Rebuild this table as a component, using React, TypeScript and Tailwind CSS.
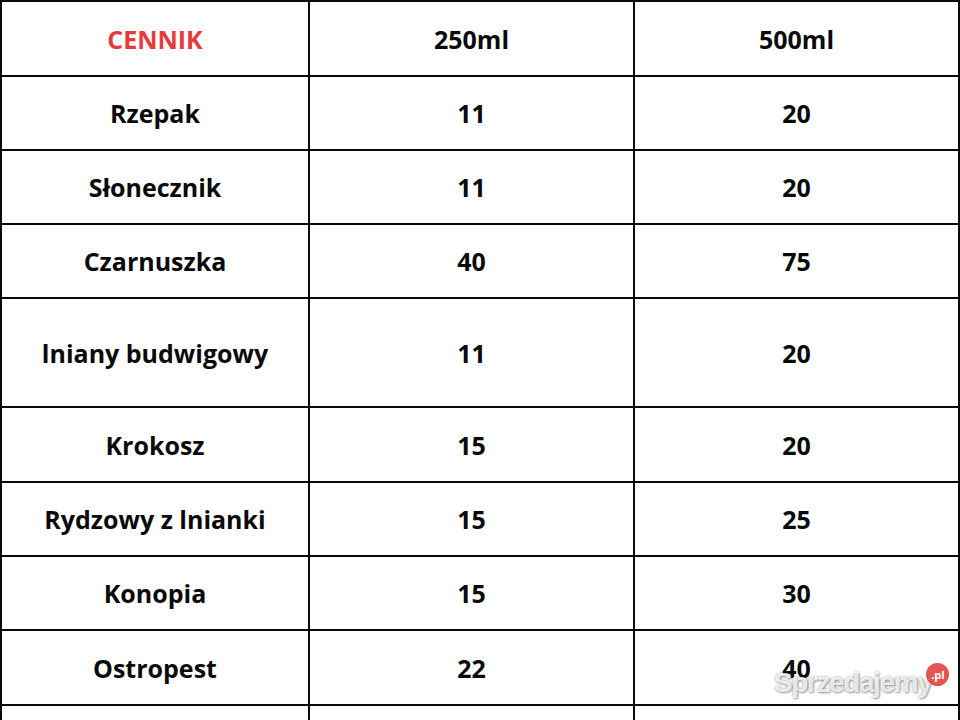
import React from "react";

const rows: { name: string; a: string; b: string; h: string }[] = [
  { name: "Rzepak", a: "11", b: "20", h: "h-[72px]" },
  { name: "Słonecznik", a: "11", b: "20", h: "h-[72px]" },
  { name: "Czarnuszka", a: "40", b: "75", h: "h-[72px]" },
  { name: "lniany budwigowy", a: "11", b: "20", h: "h-[107px]" },
  { name: "Krokosz", a: "15", b: "20", h: "h-[73px]" },
  { name: "Rydzowy z lnianki", a: "15", b: "25", h: "h-[72px]" },
  { name: "Konopia", a: "15", b: "30", h: "h-[72px]" },
  { name: "Ostropest", a: "22", b: "40", h: "h-[73px]" },
];

function Cell({ children, h, red }: { children?: React.ReactNode; h: string; red?: boolean }) {
  return (
    <div
      className={`${h} bg-white flex items-center justify-center pt-[2px] font-bold text-[25px] ${
        red ? "text-[#e73a3b]" : "text-[#0a0a0a]"
      }`}
    >
      {children}
    </div>
  );
}

export default function App() {
  return (
    <div
      className="relative w-[960px] h-[720px] overflow-hidden bg-white"
      style={{ fontFamily: '"Open Sans", "Noto Sans", sans-serif' }}
    >
      <div className="bg-[#0a0a0a] pt-[2px] px-[2px] grid grid-cols-[306px_323px_323px] gap-[2px]">
        <Cell h="h-[73px]" red>
          CENNIK
        </Cell>
        <Cell h="h-[73px]">250ml</Cell>
        <Cell h="h-[73px]">500ml</Cell>
        {rows.map((r) => (
          <React.Fragment key={r.name}>
            <Cell h={r.h}>{r.name}</Cell>
            <Cell h={r.h}>{r.a}</Cell>
            <Cell h={r.h}>{r.b}</Cell>
          </React.Fragment>
        ))}
        <Cell h="h-[40px]" />
        <Cell h="h-[40px]" />
        <Cell h="h-[40px]" />
      </div>
      <div className="absolute left-[774px] top-[669px] flex items-start">
        <span
          className="text-[28px] font-bold leading-none text-white/80 tracking-[-1.4px]"
          style={{
            fontFamily: '"Liberation Sans", Arial, sans-serif',
            textShadow: "0 0 3px rgba(0,0,0,0.35), 1px 1px 2px rgba(0,0,0,0.3)",
          }}
        >
          Sprzedajemy
        </span>
        <span className="-ml-[5px] mt-[-6px] w-[23px] h-[23px] rounded-full bg-[#e2443f]/90 flex items-center justify-center text-white text-[11px] font-bold leading-none">
          .pl
        </span>
      </div>
    </div>
  );
}
